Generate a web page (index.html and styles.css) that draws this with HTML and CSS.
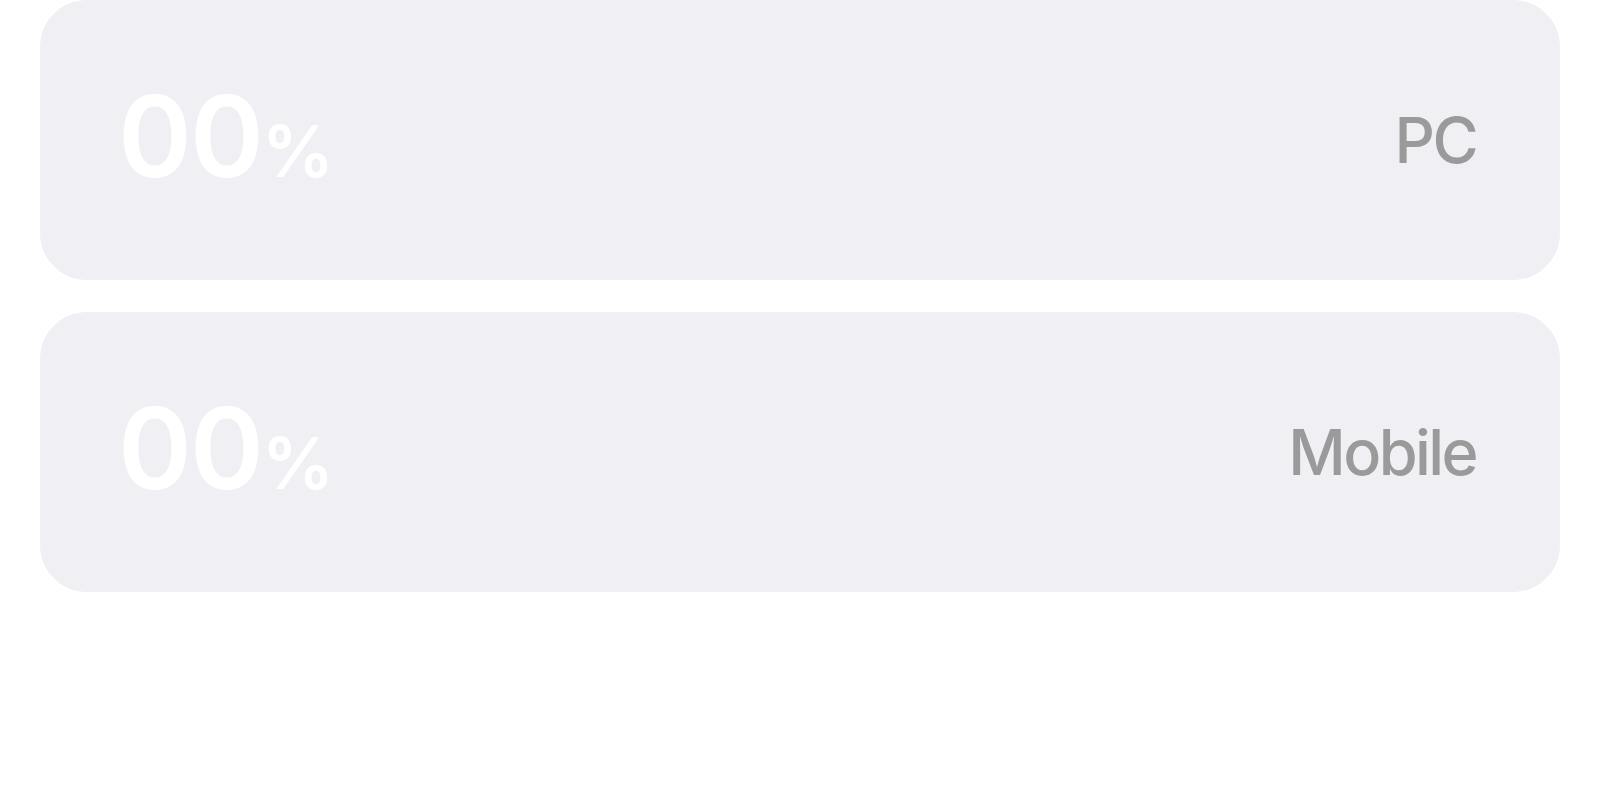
FILE: index.html
```html
<!DOCTYPE html>
<html lang="en">
<head>
    <meta charset="UTF-8">
    <meta name="viewport" content="width=device-width, initial-scale=1.0">
    <title>Usage</title>
    <link rel="stylesheet" href="styles.css">
</head>
<body>

    <div class="stats">
        <div class="stat-card">
            <div class="stat-value">00<span class="unit">%</span></div>
            <div class="stat-label">PC</div>
        </div>
        <div class="stat-card">
            <div class="stat-value">00<span class="unit">%</span></div>
            <div class="stat-label">Mobile</div>
        </div>
    </div>

</body>
</html>
```

FILE: styles.css
```css
body {
    margin: 0;
    background: #ffffff;
    font-family: Inter, "Noto Sans", sans-serif;
}
.stats {
    display: flex;
    flex-direction: column;
    gap: 32px;
    padding: 0 40px;
}
.stat-card {
    display: flex;
    align-items: center;
    justify-content: space-between;
    height: 280px;
    padding: 0 80px 0 78px;
    border-radius: 47px;
    background: #f0eff4;
}
.stat-value {
    display: flex;
    align-items: baseline;
    margin-bottom: 9px;
    color: #ffffff;
    font-size: 112px;
    font-weight: 600;
    line-height: 1;
    letter-spacing: -2px;
}
.unit {
    font-size: 72px;
    font-weight: 600;
    letter-spacing: 0;
}
.stat-label {
    margin-right: 4px;
    color: #9a9a9a;
    font-size: 63px;
    font-weight: 500;
    line-height: 1;
    letter-spacing: -2.6px;
}
```
